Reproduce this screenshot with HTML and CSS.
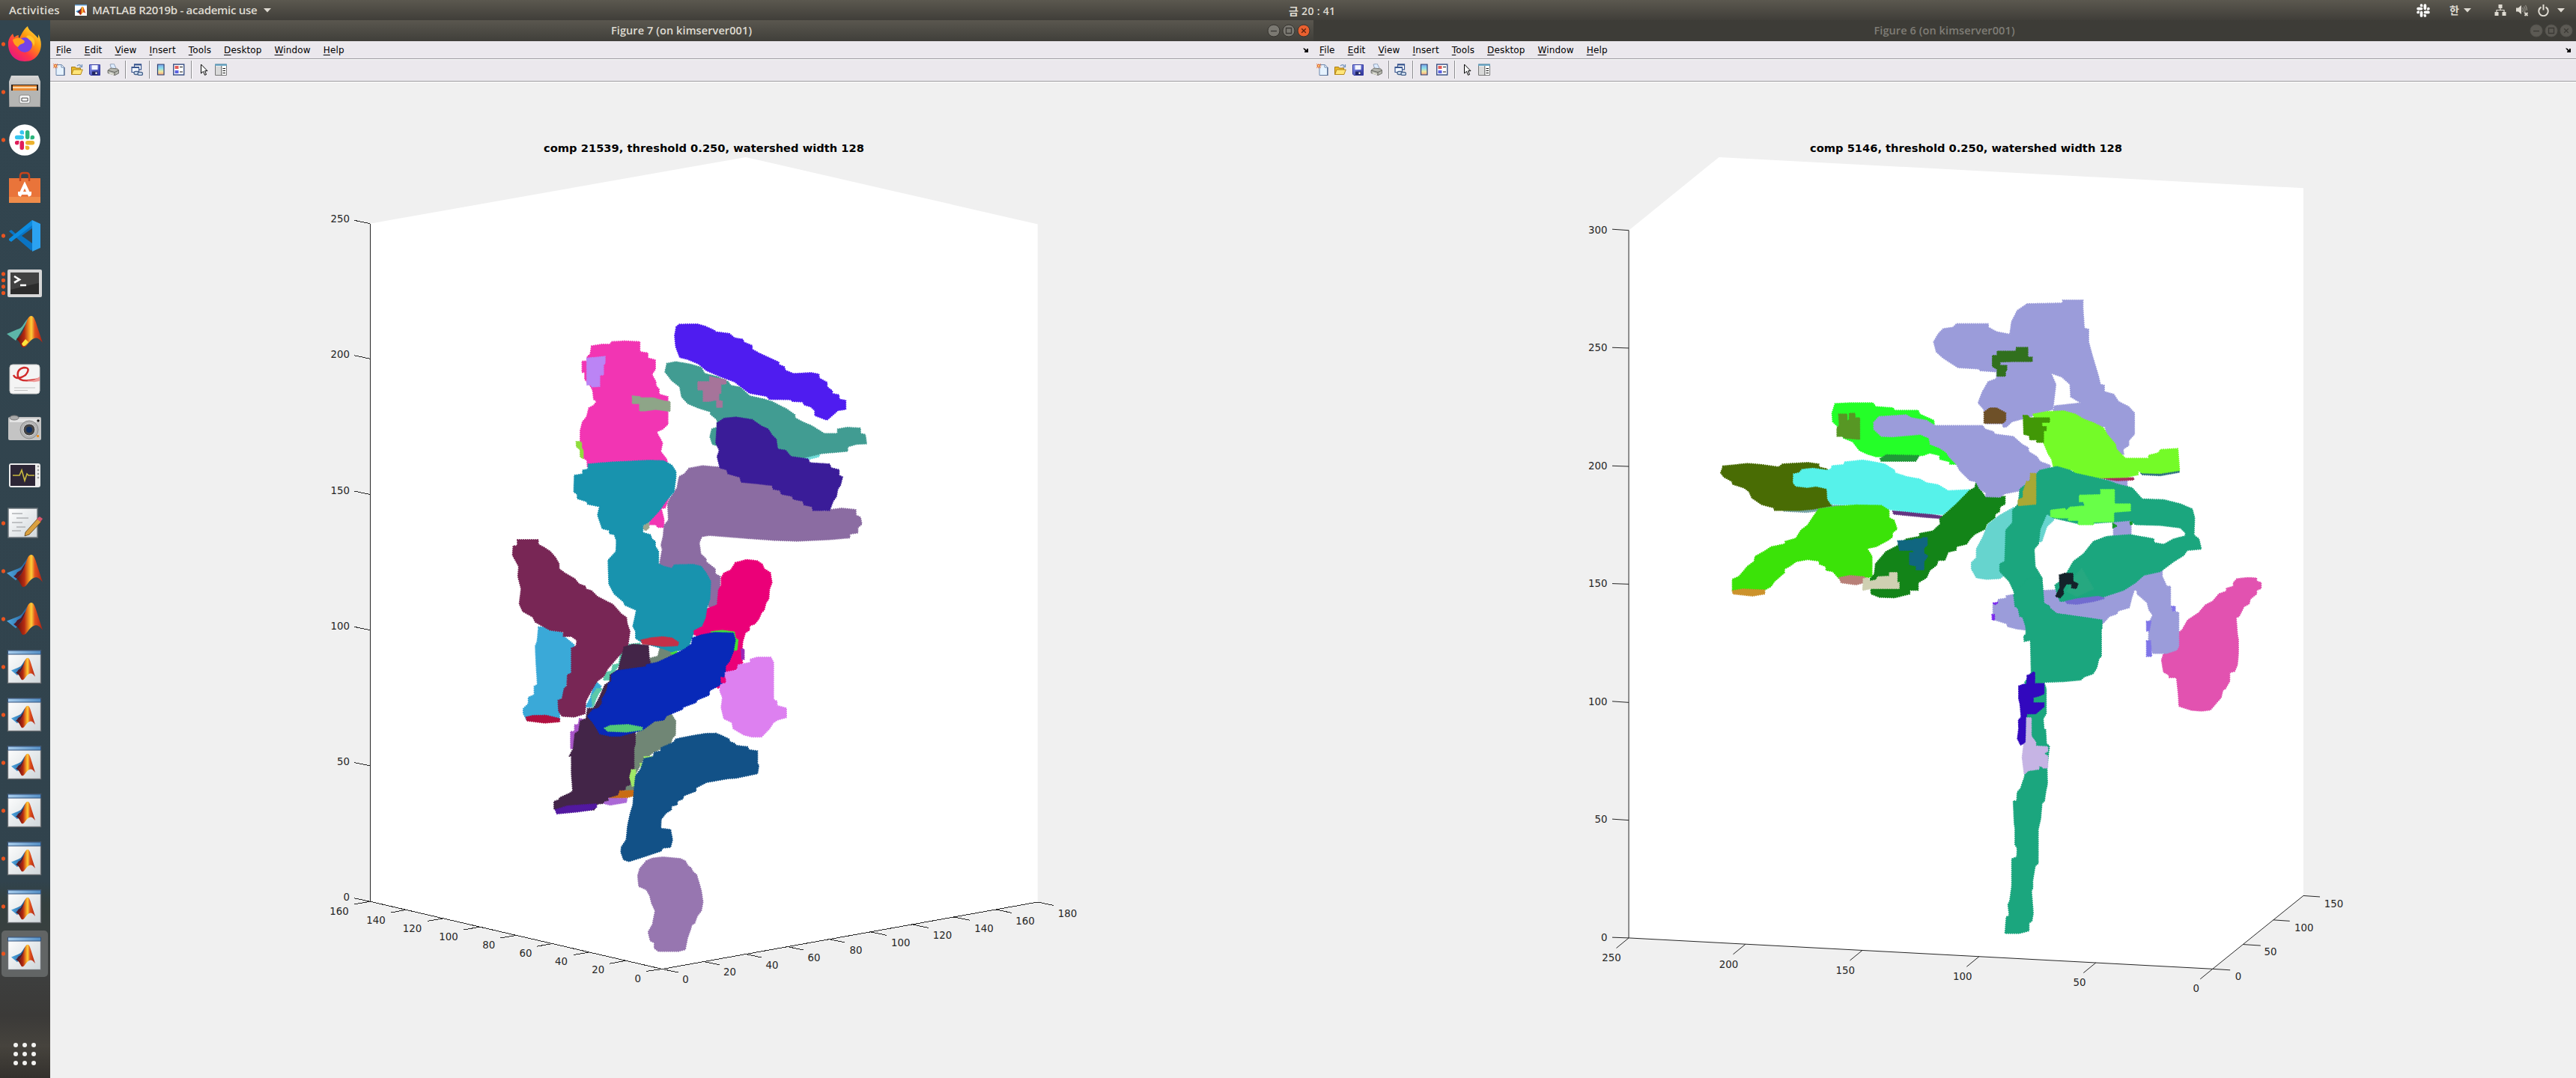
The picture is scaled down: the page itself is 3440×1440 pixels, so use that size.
FILE: index.html
```html
<!DOCTYPE html>
<html lang="ko">
<head>
<meta charset="utf-8">
<title>MATLAB R2019b - academic use</title>
<link rel="stylesheet" href="styles.css">
</head>
<body>
<svg class="defs" width="0" height="0" aria-hidden="true">
  <defs>
    <linearGradient id="membrane" x1="0" x2="1"><stop offset="0" stop-color="#5a1010"/><stop offset=".3" stop-color="#b52a12"/><stop offset=".5" stop-color="#f9a326"/><stop offset=".57" stop-color="#fbd13a"/><stop offset=".7" stop-color="#e2531d"/><stop offset="1" stop-color="#a81f14"/></linearGradient>
    <linearGradient id="wing" x1="0" x2="1"><stop offset="0" stop-color="#4fa6e0"/><stop offset="1" stop-color="#1d568f"/></linearGradient>
    <linearGradient id="fox" x1="1" y1="0" x2=".2" y2="1"><stop offset="0" stop-color="#fff44f"/><stop offset=".4" stop-color="#ff980e"/><stop offset=".7" stop-color="#ff3647"/><stop offset="1" stop-color="#e31587"/></linearGradient>
    <linearGradient id="steel" x1="0" x2="0" y1="0" y2="1"><stop offset="0" stop-color="#d8d8d8"/><stop offset="1" stop-color="#8d8d8d"/></linearGradient>
    <linearGradient id="paper" x1="0" x2="1" y1="0" y2="1"><stop offset="0" stop-color="#fff"/><stop offset="1" stop-color="#cfd6da"/></linearGradient>
    <linearGradient id="sky" x1="0" x2="1"><stop offset="0" stop-color="#a9cdec"/><stop offset="1" stop-color="#5590c6"/></linearGradient>
    <linearGradient id="rainbow" x1="0" x2="0" y1="0" y2="1"><stop offset="0" stop-color="#7aa5ee"/><stop offset=".4" stop-color="#8fe0e8"/><stop offset=".7" stop-color="#f4e69a"/><stop offset="1" stop-color="#f0a080"/></linearGradient>
    <linearGradient id="disk" x1="0" x2="1" y1="0" y2="1"><stop offset="0" stop-color="#8e9bf0"/><stop offset="1" stop-color="#2a2f9c"/></linearGradient>

    <symbol id="logo" viewBox="0 0 48 44" preserveAspectRatio="none">
      <path d="M0 25 14 19.500q5-1 8-6 4-7 10-12l-8 20-12 13z" fill="url(#wing)"/>
      <path d="M13 32C22 27 24 14 28 5q2-4 5-4c4 0 6 9 9 18l6 18c-7-9-11-7-16-3-5 5-6 9-10 9-3 0-4-8-9-11z" fill="url(#membrane)"/>
      <path d="M13 32c7-4 10-13 12-20l-6 9-5 3q-3 5-5 5z" fill="#521a28"/>
    </symbol>
    <symbol id="figure-window" viewBox="0 0 48 48">
      <rect x="1.500" y="2" width="44" height="43.500" fill="url(#paper)" stroke="#6b6f73" stroke-width="1.300"/>
      <path d="M1.500 2h44v5h-44z" fill="url(#sky)" stroke="#2f4f78" stroke-width="1"/>
      <use href="#logo" x="6" y="11" width="32" height="31"/>
    </symbol>
    <symbol id="slack" viewBox="0 0 24 24">
      <path d="M9 1.500a2.200 2.200 0 1 0 0 4.500h2.200V3.700A2.200 2.200 0 0 0 9 1.500zM1.500 9.200A2.200 2.200 0 0 0 3.700 11.400H9A2.200 2.200 0 0 0 9 7H3.700a2.200 2.200 0 0 0-2.200 2.200z" class="s1"/>
      <path d="M22.500 9.200a2.200 2.200 0 1 0-4.400 0v2.200h2.200a2.200 2.200 0 0 0 2.200-2.200zM14.900 1.500a2.200 2.200 0 0 0-2.200 2.200V9a2.200 2.200 0 0 0 4.400 0V3.700a2.200 2.200 0 0 0-2.200-2.200z" class="s2"/>
      <path d="M14.900 22.500a2.200 2.200 0 1 0 0-4.400h-2.200v2.200a2.200 2.200 0 0 0 2.200 2.200zM22.500 14.900a2.200 2.200 0 0 0-2.200-2.200H15a2.200 2.200 0 0 0 0 4.400h5.300a2.200 2.200 0 0 0 2.200-2.200z" class="s3"/>
      <path d="M1.500 14.900a2.200 2.200 0 1 0 4.400 0v-2.200H3.700a2.200 2.200 0 0 0-2.200 2.200zM9 22.500a2.200 2.200 0 0 0 2.200-2.200V15a2.200 2.200 0 0 0-4.400 0v5.300A2.200 2.200 0 0 0 9 22.500z" class="s4"/>
    </symbol>

    <symbol id="i-new" viewBox="0 0 16 16"><path d="M4 1.500h7.500l3 3v11H4z" fill="#e6f2fe" stroke="#6d87ad"/><path d="M11 1.500v3.500h3.500" fill="#fff" stroke="#6d87ad"/><path d="M15 5v11H5" fill="none" stroke="#4e688f" stroke-width="1.200"/><path d="M0 0l6 6M6 0 0 6M3-.5v7M-.5 3h7" stroke="#e8763d" stroke-width=".9"/><circle cx="3" cy="3" r="1.600" fill="#ffe27a" stroke="#d9542b" stroke-width=".8"/></symbol>
    <symbol id="i-open" viewBox="0 0 16 16"><path d="M.5 14.500v-10h5l1 1.500h6v8.500z" fill="#e9b92c" stroke="#a87b12"/><path d="M.7 14.500 3 8h12.300l-2.500 6.500z" fill="#ffe578" stroke="#b5891c"/><path d="M8 3q3-3 5.500.5M14.500 1v3.500H11" fill="none" stroke="#6d8fbb" stroke-width="1.200"/></symbol>
    <symbol id="i-save" viewBox="0 0 16 16"><path d="M.5 1.500h14v14H2l-1.500-1.500z" fill="url(#disk)" stroke="#3439a0"/><path d="M3.500 2h8v6h-8z" fill="#f3f5ff"/><path d="M4 10.500h7.500V15H4z" fill="#202560"/><path d="M8.500 11.500h2V14h-2z" fill="#fff"/></symbol>
    <symbol id="i-print" viewBox="0 0 16 16"><path d="M4 1l5-1 3 6-6 2z" fill="#dbeaff" stroke="#8090a8" stroke-width=".8"/><path d="M1 9l4-3 9 1 1.500 2v4l-5 2.500L1 12.500z" fill="#b4b5ae" stroke="#6b6c66" stroke-width=".9"/><path d="M1 9l9 2.500 5.500-2.500M10 11.500v4" fill="none" stroke="#5b5c56" stroke-width=".9"/><path d="M3 12.500l6 2" stroke="#e9e9dc" stroke-width="1.400"/></symbol>
    <symbol id="i-link" viewBox="0 0 16 16"><path d="M4.500.8h9v7h-9z" fill="#fff" stroke="#3a5790" stroke-width="1.200"/><path d="M4 1.500h10" stroke="#3a5790" stroke-width="2"/><path d="M1 4.500h9.500v7H1z" fill="#f2f6ff" stroke="#3a5790" stroke-width="1.200"/><path d="M1 5h9.500" stroke="#3a5790" stroke-width="2"/><rect x="4" y="10.500" width="6.500" height="4" rx="2" fill="#dce9f8" stroke="#44608a" stroke-width="1.300"/><rect x="9" y="11.500" width="6.500" height="4" rx="2" fill="#dce9f8" stroke="#44608a" stroke-width="1.300"/></symbol>
    <symbol id="i-colorbar" viewBox="0 0 16 16"><path d="M3.500 1h8.500v14H3.500z" fill="url(#rainbow)" stroke="#2b3f70" stroke-width="1.200"/></symbol>
    <symbol id="i-legend" viewBox="0 0 16 16"><path d="M.7 1h14v14H.7z" fill="#fff" stroke="#3c5285" stroke-width="1.400"/><path d="M2.500 3h5v4h-5z" fill="#e25c58"/><path d="M2.500 9h5v4h-5z" fill="#5c62e0"/><path d="M9 4.500h4M9 11h4" stroke="#111" stroke-width="1"/></symbol>
    <symbol id="i-arrow" viewBox="0 0 16 16"><path d="M5.500 1v12l3-2.700 2 5 2-.8-2-4.800h3.500z" fill="#fff" stroke="#000" stroke-width="1"/></symbol>
    <symbol id="i-prop" viewBox="0 0 16 16"><path d="M.5 1h15v14.500H.5z" fill="#fff" stroke="#777"/><path d="M1 3.500h7.500V15H1z" fill="#d9d9d9"/><path d="M0 .5h16v2.300H0z" fill="#5f9fc0"/><path d="M8.800 3v12.500" stroke="#555"/><path d="M10.500 6.500H14M10.500 9.500H14M10.500 12.500H14" stroke="#111" stroke-width="1.200"/></symbol>
    <symbol id="dock-arrow" viewBox="0 0 8 8"><path d="M0 1.500h2l3 2.500V2h2v5H2V5.500h1.500z" fill="#000"/></symbol>

    <symbol id="b-min" viewBox="0 0 18 18"><circle cx="9" cy="9" r="8" class="disc"/><path d="M5 9.500h8" class="sign"/></symbol>
    <symbol id="b-max" viewBox="0 0 18 18"><circle cx="9" cy="9" r="8" class="disc"/><path d="M5.500 5.500h7v7h-7z" class="sign"/></symbol>
    <symbol id="b-close" viewBox="0 0 18 18"><circle cx="9" cy="9" r="8" class="disc"/><path d="M6.200 6.200l5.600 5.600M11.800 6.200 6.200 11.800" class="sign"/></symbol>
  </defs>
</svg>

<header class="topbar">
  <span class="activities">Activities</span>
  <svg class="app-mark" viewBox="0 0 16 15"><path fill="#fff" d="M0 0h16v15H0z"/><path fill="#5d9cd3" d="M0 0h16v1.500H0z"/><use href="#logo" x="1" y="2.500" width="13.500" height="11.500"/></svg>
  <span class="app-name">MATLAB R2019b - academic use</span>
  <svg class="caret" viewBox="0 0 10 6"><path d="M0 0h10L5 5.500z"/></svg>
  <span class="clock">금 20 : 41</span>
  <div class="tray">
    <svg class="t-slack" viewBox="0 0 24 24"><use href="#slack"/></svg>
    <span class="ime">한</span>
    <svg class="caret ime-caret" viewBox="0 0 10 6"><path d="M0 0h10L5 5.500z"/></svg>
    <svg class="t-net" viewBox="0 0 15 15"><path d="M5 0h5v5H5zM0 10h5v5H0zM10 10h5v5h-5z"/><path d="M7.500 5v2.500M2.500 10V7.500h10V10" fill="none" stroke="#dfdbd2" stroke-width="1.200"/></svg>
    <svg class="t-vol" viewBox="0 0 17 16"><path d="M0 4.500h3L7 1v12L3 9.500H0z"/><path d="M8.500 4q2 3 0 6M10.500 2.500q3 4.500 0 9M12.500 1q2 3 2 7" fill="none" stroke="#8f8c84" stroke-width="1.300"/><path d="M11.500 11l4 4M15.500 11l-4 4" stroke="#dfdbd2" stroke-width="1.800"/></svg>
    <svg class="t-pow" viewBox="0 0 15 16"><path d="M4.500 3.500a6.200 6.200 0 1 0 6 0M7.500 0v7.500" fill="none" stroke="#dfdbd2" stroke-width="2"/></svg>
    <svg class="caret" viewBox="0 0 10 6"><path d="M0 0h10L5 5.500z"/></svg>
  </div>
</header>

<div class="desktop">
<nav class="dock">
  <div class="slot run"><svg viewBox="0 0 48 48"><path d="M2 21C3 16 5 13 8 10l2 5c2-2 4-3 6-3-1 2 0 3 1 4C21 8 23 4 28 0c1 5 4 6 8 10l6 6 0-5c5 8 5 18 1 25-4 8-11 11-19 11C10 47 1 36 2 21z" fill="url(#fox)"/><circle cx="24" cy="25" r="10" fill="#7542e5"/><path d="M8 18q8-5 15 1 2 2-1 4-5 1-7 5-6-3-7-10z" fill="#ffa11a"/><path d="M30 18q5 3 6 9 4-9-4-14-4-2-6 1z" fill="#ffc52b"/></svg></div>
  <div class="slot run"><svg viewBox="0 0 48 48"><path d="M6 2h36l3 8v34H3V10z" fill="url(#steel)"/><path d="M6 14h36v8H6z" fill="#2b2019"/><path d="M8 15h32v7H8z" fill="#e98b35"/><path d="M8 18h32" stroke="#fff0d0" stroke-width="1.500"/><path d="M4 22h40v21H4z" fill="#b5b5b3"/><rect x="17" y="28" width="14" height="11" rx="2" fill="#f4f4f4" stroke="#888"/><path d="M20 32h8v4h-8z" fill="#fff" stroke="#444"/></svg></div>
  <div class="slot run"><svg viewBox="0 0 48 48"><circle cx="24" cy="24" r="20.800" fill="#fff"/><use href="#slack" x="9" y="9" width="30" height="30"/></svg></div>
  <div class="slot"><svg viewBox="0 0 48 48"><path d="M3 11h42v33H3z" fill="#e9743a"/><path d="M3 36h42v8H3z" fill="#f08c4a"/><path d="M18 15V8q0-4 4-4h4q4 0 4 4v7" fill="none" stroke="#c5441b" stroke-width="2.500"/><path d="M17 35l7-15 7 15M15 31h18" fill="none" stroke="#fff" stroke-width="4"/></svg></div>
  <div class="slot run"><svg viewBox="0 0 48 48"><path d="M34 3 14 23 6 16l-3 2 30 26 4-8z" fill="#0a74c4"/><path d="M3 30l3 2 28-22v-7L3 28z" fill="#0c8ce0"/><path d="M34 3l11 5v32l-11 5z" fill="#2ba2f1"/><path d="M34 14v20L20 24z" fill="#33444f"/></svg></div>
  <div class="slot run4"><svg viewBox="0 0 48 48"><rect x="1" y="5" width="46" height="37" rx="2" fill="#d7d7d7"/><path d="M5 9h38v29H5z" fill="#2c2c2c"/><path d="M5 9h38v14L5 32z" fill="#424242"/><path d="M10 14l7 4.500-7 4M18 26h8" fill="none" stroke="#fff" stroke-width="2.600"/></svg></div>
  <div class="slot"><svg viewBox="0 0 48 48"><g transform="translate(0 2)"><path d="M0 25 14 19q5-1 8-6 4-7 10-12L12 34z" fill="#5db5a8"/><path d="M13 32C22 27 24 14 28 5q2-4 5-4c4 0 6 9 9 18l6 18c-7-9-11-7-16-3-5 5-6 9-10 9-3 0-4-8-9-11z" fill="url(#membrane)"/><path d="M20 38c2 6 5 3 9-2l-4-4z" fill="#ffe53b"/></g></svg></div>
  <div class="slot"><svg viewBox="0 0 48 48"><rect x="4" y="4" width="40" height="39" rx="4" fill="#f4f4f4" stroke="#c9c9c9"/><path d="M9 18q4 8 16 0 8-10-2-10-10 2-8 12 2 9 29 3" fill="none" stroke="#d02a2a" stroke-width="2.500"/><path d="M25 24q8 4 19-4v6q-11 3-19-2z" fill="#ee9a98"/><path d="M10 35h28M10 38.500h18" stroke="#c3c3c3"/></svg></div>
  <div class="slot"><svg viewBox="0 0 48 48"><rect x="2" y="10" width="44" height="31" rx="2" fill="#c4c4c4"/><path d="M4 12h40v5H4z" fill="#e4e4e4"/><ellipse cx="10" cy="11" rx="6" ry="3" fill="#aaa" stroke="#777"/><circle cx="30" cy="27" r="12" fill="#b3b3b3" stroke="#8a8a8a"/><circle cx="30" cy="27" r="8" fill="#444" stroke="#ddd"/><circle cx="30" cy="27" r="4" fill="#12305f"/><circle cx="42" cy="15" r="1.700" fill="#111"/><path d="M40 34h3v3h-3z" fill="#e8912a"/></svg></div>
  <div class="slot"><svg viewBox="0 0 48 48"><rect x="3" y="8" width="42" height="32" rx="3" fill="#ececec"/><path d="M5 10h33v28H5z" fill="#2d2636"/><path d="M8 24h9l3-7 4 14 3-9 2 2h8" fill="none" stroke="#c9b93f" stroke-width="1.600"/><g fill="#999"><circle cx="42" cy="12" r="1.300"/><circle cx="42" cy="17" r="1.300"/><circle cx="42" cy="22" r="1.300"/><circle cx="42" cy="27" r="1.300"/></g></svg></div>
  <div class="slot run"><svg viewBox="0 0 48 48"><path d="M2 4h39v39H2z" fill="url(#paper)" stroke="#6a737a" stroke-width="1.500"/><path d="M7 11h14M13 17h16M7 23h14M13 29h12M7 34h12" stroke="#b0b3b5" stroke-width="1.600"/><path d="M25 36 41 18l5 4-16 17-6 2z" fill="#d9a03f" stroke="#5a3c12" stroke-width=".8"/><path d="M40 18l4-3 4 3-3 4z" fill="#d9566c"/></svg></div>
  <div class="slot run"><svg viewBox="0 0 48 48"><use href="#logo" y="1" width="48" height="45"/></svg></div>
  <div class="slot run"><svg viewBox="0 0 48 48"><use href="#logo" y="1" width="48" height="45"/></svg></div>
  <div class="slot run"><svg><use href="#figure-window"/></svg></div>
  <div class="slot run"><svg><use href="#figure-window"/></svg></div>
  <div class="slot run"><svg><use href="#figure-window"/></svg></div>
  <div class="slot run"><svg><use href="#figure-window"/></svg></div>
  <div class="slot run"><svg><use href="#figure-window"/></svg></div>
  <div class="slot run"><svg><use href="#figure-window"/></svg></div>
  <div class="slot run active"><svg><use href="#figure-window"/></svg></div>
  <svg class="apps" viewBox="0 0 30 30"><g fill="#f2f2f0"><circle cx="3" cy="3" r="3"/><circle cx="15" cy="3" r="3"/><circle cx="27" cy="3" r="3"/><circle cx="3" cy="15" r="3"/><circle cx="15" cy="15" r="3"/><circle cx="27" cy="15" r="3"/><circle cx="3" cy="27" r="3"/><circle cx="15" cy="27" r="3"/><circle cx="27" cy="27" r="3"/></g></svg>
</nav>

<section class="window focused">
  <div class="titlebar"><span class="caption">Figure 7 (on kimserver001)</span><div class="buttons"><svg><use href="#b-min"/></svg><svg><use href="#b-max"/></svg><svg class="close"><use href="#b-close"/></svg></div></div>
  <div class="menubar"><span><u>F</u>ile</span><span><u>E</u>dit</span><span><u>V</u>iew</span><span><u>I</u>nsert</span><span><u>T</u>ools</span><span><u>D</u>esktop</span><span><u>W</u>indow</span><span><u>H</u>elp</span><svg class="dock-toggle"><use href="#dock-arrow"/></svg></div>
  <div class="toolbar"><svg><use href="#i-new"/></svg><svg><use href="#i-open"/></svg><svg><use href="#i-save"/></svg><svg><use href="#i-print"/></svg><i></i><svg><use href="#i-link"/></svg><i></i><svg><use href="#i-colorbar"/></svg><svg><use href="#i-legend"/></svg><i></i><svg><use href="#i-arrow"/></svg><svg><use href="#i-prop"/></svg></div>
  <svg class="plot" viewBox="67 110 1687 1330">
    <g transform="translate(420 170) scale(.66327 .7398)">
      <path fill="#fff" d="M112 174 868 54 1456 175V1399L700 1520 112 1398z"/>
      <path class="axis" d="M112 174V1398L700 1520 1456 1399
        M112 174l-32-6M112 418l-32-6M112 663l-32-6M112 908l-32-6M112 1153l-32-6M112 1398l-32-6
        M112 1398l-32 5M185.500 1413l-32 5M259 1428.500l-32 5M332.500 1444l-32 5M406 1459l-32 5M479.500 1474l-32 5M553 1489.500l-32 5M626.500 1505l-32 5M700 1520l-32 4
        M700 1520l32 6M784 1506.500l32 6M868 1493l32 6M952 1479.500l32 6M1036 1466l32 6M1120 1453l32 6M1204 1439.500l32 6M1288 1426l32 6M1372 1412.500l32 6M1456 1399l32 6"/>
    </g>
    <g class="voxels" transform="translate(640 820) scale(.357143 .333333)">
      <path class="v" style="--c:#3aa9d8" d="M222 53H262V66L310 73 316 90 355 125 346 240 330 250 322 320 300 345V425H178L165 400V380L184 360V335L206 325V290L218 284 213 200 210 130 217 110z"/>
      <path class="v" style="--c:#3aa9d8" d="M433 268 455 290 440 330 420 373H398L415 340z"/>
      <path class="v" style="--c:#708675" d="M678 128 720 150 735 160 690 190 640 200V178L668 170z"/>
      <path class="v" style="--c:#708675" d="M718 402 734 430 733 485 722 498 715 520 680 540 650 555 610 590 585 640 580 710H545L560 640 578 500 600 460 690 400z"/>
      <path class="v" style="--c:#5cc8a8" d="M540 125 600 118 605 130 560 140 540 150 525 200 500 240 490 265 465 265 470 235 495 230 500 205 522 200 528 160zM440 300 460 300 445 320 435 345 425 375 420 330z"/>
      <path class="v" style="--c:#a855c8" d="M375 420 395 425 350 540H342V472H357V445H370z"/>
    </g>
    <g class="voxels" transform="translate(640 400) scale(.357143 .333333)">
      <path class="v" style="--c:#f235b3" d="M420 187 460 180H490L495 170 545 167 600 170V210L630 215V235L658 243V280L645 300 660 330V345L672 360V380L705 390V500L685 520 662 530 672 550 685 575 678 610 700 640 705 665 680 700 708 795 695 835 680 838 690 880V913H668L660 902H635L650 850 600 700 405 670 403 645 390 635V610L378 575V525L386 492 402 470 410 435 428 425 440 408 428 400 425 365 415 345 395 320V292H385V248H402L405 228 415 220z"/>
      <path class="v grid" style="--c:#bb84f5" d="M403 236 470 229V255L464 262V302H450V348L420 350V342H403z"/>
      <path class="v grid" style="--c:#8ea588" d="M573 387 600 390 605 395H650L690 407 713 410V448L660 440 620 446H600V417H573z"/>
      <path class="v grid" style="--c:#8fdc3c" d="M363 570H376L382 575V597L388 604V637L378 630V602L364 590z"/>
      <path class="v grid" style="--c:#9ea58e" d="M628 888 634 895V915L622 926 611 915z"/>
      <path class="v" style="--c:#6fdcd8" d="M1195 635 1272 620 1270 630 1230 641z"/>
      <path class="v" style="--c:#4f1cf0" d="M737 110 748 100 815 99 845 108 880 125V130L935 137 955 155 985 160 990 172 1020 185V200L1045 215 1120 252V262L1140 270 1145 285 1175 298 1240 294 1270 300V315L1300 333V350L1320 367V378L1345 383V400L1370 405V440L1340 445 1325 460 1300 483 1255 465V445L1240 430 1215 422 1210 410 1170 408 1165 401 1085 400 1075 388 1010 375 985 355 955 330 905 310 850 285 820 258 780 240 750 232 735 190 731 145z"/>
      <path class="v" style="--c:#419c92" d="M702 257 735 250 790 260 830 273 842 297 890 310 930 330 940 345 975 352 1010 387 1065 400 1095 410 1150 440 1180 463V475L1210 492 1240 505 1290 538 1340 538V520L1375 513 1425 516V537L1443 542 1448 578 1410 580 1377 590V608L1280 617 1210 635 1110 640 900 560 887 585 872 580 863 550 870 520 890 512V482L865 460V450L820 435 780 417 757 390 750 350 720 325 695 290z"/>
      <path class="v grid" style="--c:#a6749a" d="M862 310 922 323V338L903 340V375L895 378V405L908 408V432H888V402L860 408H838V362H818V330H862z"/>
      <path class="v" style="--c:#8b6ca2" d="M785 677 835 667 925 675 1000 720 1100 745 1130 775 1200 800 1290 850 1300 845 1355 837 1408 843V865L1425 873 1430 900 1415 915V935L1385 940V955L1310 962 1190 968 1105 965 1000 957 860 945 832 950 822 975 828 1020 848 1040V1052L882 1080V1100L900 1110V1160L895 1225 865 1240 840 1200 760 1080 685 1075 675 1060 685 1000 680 985 688 950 692 905 708 885 705 820 712 800 740 755 748 710 767 700z"/>
      <path class="v" style="--c:#3a1c98" d="M890 495 915 477 960 472 1020 482 1055 508 1080 520 1095 545 1110 560 1115 600 1145 605 1165 630 1230 640 1235 655 1310 660 1315 675 1345 683V705L1358 712 1350 745 1340 760 1335 790 1322 810 1310 845H1248L1245 830 1215 823 1210 808 1175 800 1170 788 1130 780 1125 765 1100 760 1095 745 1040 738 980 732 975 712 930 698 925 682 900 675 890 630 898 605 885 575z"/>
      <path class="v" style="--c:#eb0078" d="M958 1055 1000 1043 1040 1048 1058 1062 1065 1080 1088 1095 1094 1135 1085 1160 1082 1200 1072 1215 1065 1245 1055 1255 1045 1280 1030 1300 1010 1308V1325L995 1335 985 1370 980 1430 985 1460 940 1500 895 1558 880 1550 900 1400 800 1340V1325L832 1308 850 1240 890 1225 895 1165 905 1145V1115L915 1097 940 1085z"/>
      <path class="v" style="--c:#1893ae" d="M408 660 500 652 640 645 690 647 720 665 735 690V710L728 770 700 805 670 850 635 890 611 905V935L640 943 645 960 658 970V990L670 1010V1060L690 1070 720 1078 730 1064 800 1062 830 1070 850 1100 865 1130 862 1200 850 1240 845 1275 832 1308 800 1325V1340L780 1400 720 1412 690 1400 610 1375 585 1358V1330L575 1310 588 1245 545 1225 540 1212 505 1180 485 1140 482 1045 512 1010 513 965 505 942 487 938V925L460 918 443 865 450 830 405 820 403 810 367 798V780L354 772 356 705 387 700V685L407 680z"/>
      <path class="v" style="--c:#782655" d="M143 963H220V982L240 993 265 1010 285 1035 298 1060V1080L320 1097 357 1120 372 1140 397 1150V1160L420 1168 440 1190 500 1223 530 1260 550 1275 553 1300 563 1330 555 1390 520 1430 480 1480 465 1510 440 1530 415 1575 398 1610 395 1660 355 1673 310 1670 297 1650 295 1607 310 1600 318 1560 328 1550 330 1505 345 1498V1398L362 1390 366 1366 345 1350H315V1332L265 1325 210 1293 200 1272 163 1250 150 1220 157 1160 145 1110 148 1070 125 1025 127 988H143z"/>
    </g>
    <g class="voxels" transform="translate(640 820) scale(.357143 .333333)">
      <path class="v" style="--c:#c43048" d="M606 105 640 97 685 92 720 97 745 115 742 127 690 130 610 120z"/>
      <path class="v" style="--c:#b01040" d="M176 414 200 408 250 407 300 420V432L245 437 178 428z"/>
      <path class="v" style="--c:#432548" d="M542 133 575 122 632 127 635 175 640 200 600 460 583 470V520L578 540V620L570 635 563 685 547 690 545 705 527 715 510 740 470 758 440 762 430 785 290 790 280 780V752L300 745V738L340 718 350 710 345 640V570H337L352 540 358 480 372 470 378 430 400 420 405 380 428 378 445 345 460 310 470 285 488 272 490 245 520 225 528 190z"/>
      <path class="v" style="--c:#5218a0" d="M285 785 330 770 438 762V775L420 785 370 793 290 801z"/>
      <path class="v" style="--c:#c86c14" d="M527 710 580 708V728L545 738 485 740 520 728z"/>
      <path class="v" style="--c:#ab68d6" d="M485 740H552L550 755 490 766 467 760V755L485 750z"/>
      <path class="v grid" style="--c:#9fe868" d="M570 625H584L585 690H572L563 655zM602 600H612L605 615zM617 573 647 572 640 582H620z"/>
      <path class="v grid" style="--c:#9a28b8" d="M980 142H990V182H982z"/>
      <path class="v grid" style="--c:#3fe338" d="M868 72 910 67 953 73 958 98 967 105 963 145 950 145 945 90zM718 158 740 150 730 165z"/>
      <path class="v" style="--c:#0829b8" d="M797 97 830 85 880 75 950 77 957 105 950 150 935 190 920 210V235L908 280 860 308V325L815 345 810 355 760 375V382L700 408 690 425 655 430 610 465 560 480 525 490H490L450 480 440 460 425 435 405 410 425 385 447 378 460 360V340L475 315 483 280 495 270V245L515 228 625 212V204L665 195 700 178 735 160 770 140 795 120z"/>
      <path class="v" style="--c:#52c876" d="M469 458 490 448 555 444 609 455V465L550 473 480 470z"/>
      <path class="v" style="--c:#dd80f0" d="M1015 182 1040 174H1090L1100 195V345L1113 350V368L1148 378V415L1115 425 1100 435 1085 460 1055 493 1020 493 990 485 950 460 945 435 915 420 905 375 910 335 900 310 902 285 920 275V235L965 225 968 205 1013 195z"/>
      <path class="v grid" style="--c:#eb0078" d="M905 255 920 258V275H905z"/>
      <path class="v" style="--c:#125187" d="M727 515 735 502 790 490 845 480 885 479 910 490 935 503V512L955 520 960 528 1003 533 1008 545 1040 550V600L1045 608 1040 640 960 658 930 660 850 675 810 697V710L765 728 760 742 740 750V765L718 770V785L698 798 680 823 678 860 715 865 722 905 715 935 685 938 680 950 610 975 560 992 540 985 530 955 532 935 550 905 555 850 565 800 575 765 580 700 585 650 605 620 617 580 650 573 655 555 680 550V537z"/>
      <path class="v" style="--c:#9776b0" d="M625 990 650 979 690 975 750 981 770 990 780 1010 792 1018 798 1033 812 1045 822 1080 830 1110 836 1155 830 1190 815 1210 805 1240 795 1245 788 1270 778 1300 770 1345 745 1352H670L655 1340V1318L640 1310 632 1275 648 1245 658 1190 645 1160 638 1130 625 1105 597 1092 593 1050 600 1022z"/>
    </g>
    <g class="ticks end">
      <text x="467" y="297">250</text><text x="467" y="478">200</text><text x="467" y="659.500">150</text><text x="467" y="841">100</text><text x="467" y="1022">50</text><text x="467" y="1203">0</text>
    </g>
    <g class="ticks">
      <text x="453" y="1222">160</text><text x="502" y="1234">140</text><text x="550.500" y="1245">120</text><text x="599" y="1256">100</text><text x="652.800" y="1267">80</text><text x="702" y="1278">60</text><text x="749.600" y="1289">40</text><text x="798.700" y="1300">20</text><text x="851.800" y="1312">0</text>
      <text x="915.500" y="1313">0</text><text x="974.500" y="1303">20</text><text x="1031" y="1294">40</text><text x="1087" y="1284">60</text><text x="1143" y="1274">80</text><text x="1202.700" y="1264">100</text><text x="1258.400" y="1254">120</text><text x="1314" y="1244.700">140</text><text x="1369" y="1235">160</text><text x="1425.500" y="1225">180</text>
    </g>
    <text class="plot-title" x="726" y="202.500" textLength="428">comp 21539, threshold 0.250, watershed width 128</text>
  </svg>
</section>

<section class="window">
  <div class="titlebar"><span class="caption">Figure 6 (on kimserver001)</span><div class="buttons"><svg><use href="#b-min"/></svg><svg><use href="#b-max"/></svg><svg><use href="#b-close"/></svg></div></div>
  <div class="menubar"><span><u>F</u>ile</span><span><u>E</u>dit</span><span><u>V</u>iew</span><span><u>I</u>nsert</span><span><u>T</u>ools</span><span><u>D</u>esktop</span><span><u>W</u>indow</span><span><u>H</u>elp</span><svg class="dock-toggle"><use href="#dock-arrow"/></svg></div>
  <div class="toolbar"><svg><use href="#i-new"/></svg><svg><use href="#i-open"/></svg><svg><use href="#i-save"/></svg><svg><use href="#i-print"/></svg><i></i><svg><use href="#i-link"/></svg><i></i><svg><use href="#i-colorbar"/></svg><svg><use href="#i-legend"/></svg><i></i><svg><use href="#i-arrow"/></svg><svg><use href="#i-prop"/></svg></div>
  <svg class="plot" viewBox="1754 110 1686 1330">
    <g transform="translate(2080 170) scale(.68878 .75255)">
      <path fill="#fff" d="M138 183 313 53 1446 108V1364L1270 1494 138 1439z"/>
      <path class="axis" d="M138 183V1439L1270 1494 1446 1364
        M138 183l-32-2M138 392l-32-1M138 602l-32-1M138 811l-32-1M138 1021l-32-2M138 1230l-32-2M138 1439l-32-1
        M138 1439l-24 18M364.400 1450l-24 18M590.800 1461l-24 18M817.200 1472l-24 18M1043.600 1483l-24 18M1270 1494l-24 18
        M1270 1494l34 2M1329 1450.500l34 2M1387.500 1407l32 2M1446 1364l32 2"/>
    </g>
    <g class="voxels" transform="translate(2560 740) scale(.333333)">
      <path class="v" style="--c:#e252b0" d="M1282 100 1325 95 1360 97V110L1378 115V138L1360 145V160L1335 180 1330 200 1310 210 1290 250 1278 255 1283 320 1287 345V400L1283 445 1272 470 1252 475V510L1235 540 1225 545 1218 575 1205 590 1175 625 1140 629 1100 626 1050 610 1047 560 1040 495H1010V485L988 473 980 425 988 400 1045 370 1048 315 1062 305 1085 265 1130 235 1155 205 1185 190 1210 160 1240 150V138L1268 130V115z"/>
      <path class="v" style="--c:#9b9cda" d="M982 65V90L1000 130H1015V210L1028 230 1048 235V370L1040 385 1000 398H945L928 345 930 275 945 245 930 225 922 195 900 175 882 160V145H870L860 175 850 215 805 228 800 240 770 250 745 278 600 260 500 210 440 305 400 300 362 290V280L305 262V200L325 195V183L358 178V168L400 160 500 147 550 145 700 160 860 100z"/>
      <path class="v" style="--c:#7f75e8" d="M920 270H937L930 308H920zM920 348H935L940 410H920zM1020 210H1034V228H1025z"/>
      <path class="v" style="--c:#7a28ee" d="M306 197 325 194 312 203zM301 243H310V264H302z"/>
    </g>
    <g class="voxels" transform="translate(2260 380) scale(.446429 .333333)">
      <path class="v" style="--c:#9b9cda" d="M1002 78 1108 75V63H1168V95L1172 175 1185 180V230L1195 280 1215 370 1220 400 1232 405V430L1260 440 1275 470 1305 490 1322 515V600L1305 625V645L1288 660 1290 680 1250 690 1235 570H1222L1100 510H1080L1083 487 1163 475 1132 450 1130 400 1105 370 1072 355 1087 400 1078 500 1010 530 955 550 940 570 930 572 928 557H880L872 500 855 475 868 430 885 390 910 378V350L860 345 858 338 795 333 768 310 748 292 730 270 722 230 735 200 750 178 780 172 790 158H885V172L910 190 950 200 955 150 972 105z"/>
      <path class="v" style="--c:#9b9cda" d="M1240 780H1300V812H1260zM1260 945H1312V1010H1260z"/>
      <path class="v" style="--c:#24ff28" d="M427 478 470 475H540L548 490 600 495 605 505H675L680 520 722 545 724 570 710 620 740 650 770 690 788 720H770V710L740 700V685L710 675 690 685 620 690H550L525 680 500 665 480 630 452 615 436 570 420 550 418 515z"/>
      <path class="v grid" style="--c:#579724" d="M438 520H462V545H470V517H486V535H500V620L455 615 450 608H433V575L440 565z"/>
      <path class="v" style="--c:#209838" d="M562 698 580 683 678 686 668 708H565z"/>
      <path class="v" style="--c:#77a2a6" d="M275 908 420 885H455V895L340 913z"/>
      <path class="v" style="--c:#496c04" d="M92 728 165 718 205 722 258 732 270 720 345 714 378 720V732L403 740 412 820 415 887 360 900 320 905H245V895L208 882 178 855 170 830 155 815 120 800V790L95 772 85 755z"/>
      <path class="v" style="--c:#643480" d="M600 908 680 913 750 930V938L700 933 602 920z"/>
      <path class="v" style="--c:#56f2ea" d="M303 760 320 755 328 742 360 737 403 745 415 740 418 727 455 722V712L510 704 545 712 575 720 605 745V755L640 770 680 780 700 795 735 803 765 827 830 823 800 870 770 900 750 922 680 915 580 900 560 890 415 880 405 860 403 818 370 808 345 813 310 808 302 795z"/>
      <path class="v" style="--c:#3be308" d="M378 900 430 890 490 884 565 886 588 905V935L603 945 612 980 598 995V1012L585 1025 550 1050 522 1058 537 1090V1170L515 1180H440L420 1150 400 1145V1130L380 1120V1108L345 1102 310 1110 292 1128 275 1140V1155L245 1190 235 1210 215 1225 120 1228V1182L140 1170 165 1130 185 1110 188 1090 215 1070 235 1052 278 1040V1030L310 1018 325 985 345 965 357 940z"/>
      <path class="v" style="--c:#cc922c" d="M120 1228 150 1221 216 1225V1240L180 1248 122 1240z"/>
      <path class="v" style="--c:#138418" d="M850 787 858 800 860 820 875 850H935V880L920 890 918 910 905 920V935L880 960 875 980 845 1000 830 1020 820 1040 790 1050 788 1065 765 1072 755 1105H735L730 1125 710 1145 700 1175 675 1195V1225H650V1240L605 1255 560 1253 535 1240 532 1180 545 1160 548 1120 580 1070 610 1050 640 1020 680 1010V998L720 988 742 960 740 940 790 880 830 825 845 815z"/>
      <path class="v grid" style="--c:#106680" d="M615 1028 660 1025 665 1020H688V1015H702V1045L692 1055V1078L704 1088 692 1110V1143H670V1128L650 1122V1075H665L660 1065 620 1065z"/>
      <path class="v" style="--c:#b88078" d="M440 1175 470 1167 515 1172 520 1192 490 1203 445 1195z"/>
      <path class="v grid" style="--c:#cfd0b2" d="M512 1180 525 1175 530 1190 550 1185 555 1172 590 1170V1155H612V1195H618V1218H535L510 1225z"/>
      <path class="v" style="--c:#9b9cda" d="M543 553 558 530 640 523 655 535 700 545 725 566H868L875 580 900 590 905 600 960 610 985 640 1005 655V670L1030 690 1040 710 1070 725V735L1040 745 1038 760 985 825 935 838 920 852 878 850V835L860 820 848 790 830 785 800 745 790 720 768 690 760 672 740 655 712 640 708 615 682 600 600 610 565 608 543 580z"/>
      <path class="v grid" style="--c:#31701e" d="M970 253H1003V292H1016V308H960L920 310V325H940V345H936V367H912V345H918L898 328V285H912V268H968z"/>
      <path class="v" style="--c:#6e5028" d="M873 512 890 495H910L937 515V545L928 556H873z"/>
      <path class="v" style="--c:#a83058" d="M1215 775H1320V783L1270 786z"/>
      <path class="v" style="--c:#307080" d="M1342 755 1455 745 1457 752 1400 766 1345 762z"/>
      <path class="v" style="--c:#74fb28" d="M1020 520 1060 510 1110 507 1145 520 1170 540 1200 555 1230 575 1240 600 1265 640 1268 660 1295 697H1365V685L1395 675 1400 662 1452 658 1457 745 1400 757 1345 755 1333 745V762L1300 772 1210 776 1140 755V745L1080 730 1075 700 1065 680 1048 625 1030 580z"/>
      <path class="v grid" style="--c:#419806" d="M990 525H1003L1008 535H1068V552H1045V570H1058V585H1050V632H1030V622H1010L1008 605 992 600z"/>
      <path class="v" style="--c:#66d4ce" d="M960 895 1000 900 1060 918 1085 920 1080 945 1060 970 1045 1030 1000 1035 938 1160 920 1178 880 1181 850 1175 835 1140 835 1115 850 1095V1060L870 1010 885 960 920 925z"/>
      <path class="v" style="--c:#1ba67e" d="M1040 745 1090 730 1130 745 1145 757 1240 785 1270 800 1315 815 1345 860 1410 863 1460 880 1495 900 1502 935 1500 1005 1515 1020 1522 1060 1480 1065 1470 1085 1440 1110 1400 1150 1350 1165 1325 1195 1290 1225 1210 1260 1100 1270 1088 1225 1085 1205 1110 1180 1140 1110 1170 1080 1200 1030 1240 1010 1310 1003 1380 1020V1035L1410 1042 1440 1020 1475 1008V995L1460 975 1400 965 1325 962 1310 945 1250 952 1160 960 1080 935 1060 918 1040 980 1035 1040 1022 1060 1025 1130 1045 1175 1050 1275 1090 1320 1225 1345V1380H1000L985 1320 970 1290 962 1230 948 1190 920 1150V1120L935 1110 938 985 958 955V905L975 880 980 820 1000 800z"/>
      <path class="v grid" style="--c:#a9a834" d="M1012 758H1027V880L975 886V863L990 855V830L1000 790H1010z"/>
      <path class="v grid" style="--c:#68ff48" d="M1222 822H1262V880H1310V907L1260 912V950L1200 952V962H1155V945H1125V935H1090L1072 930V905L1115 898V910L1130 893 1175 888 1170 870H1158V845L1222 843z"/>
      <path class="v grid" style="--c:#139a28" d="M1258 958 1270 968 1258 975zM1310 952H1315V962H1310z"/>
      <path class="v" style="--c:#26a880" d="M1165 1140 1200 1220 1150 1250 1120 1230 1150 1160z"/>
      <path class="v" style="--c:#716bd0" d="M1118 1270 1150 1260 1215 1250 1233 1258 1200 1270 1150 1281 1120 1278z"/>
      <path class="v grid" style="--c:#14222a" d="M1115 1158H1138V1190L1153 1200 1148 1218 1135 1215V1200H1118L1108 1222 1110 1240 1100 1255 1087 1250 1100 1215 1098 1165z"/>
    </g>
    <g class="voxels" transform="translate(2560 740) scale(.333333)">
      <path class="v" style="--c:#1ba67e" d="M388 165 440 100 500 95 508 200 530 208V222L560 240 600 245 700 260 738 268V410L728 420 720 455 705 480 670 492 655 505 590 511 508 514 517 540V640L505 660 508 700 515 705 518 760 530 770 522 840 520 850 522 920 515 955 510 990 500 1000 495 1060 485 1105V1240L473 1250 463 1310V1340L458 1350 465 1440 460 1470 448 1480V1510L410 1520H353L358 1455 370 1450 365 1405 372 1390 380 1330V1222L400 1215 402 1180 393 1165V1100L390 1080 386 990H400L402 955 415 940 432 890V770L440 600 432 515 458 475 455 345 430 350 428 330 437 320 435 255 412 250 405 215 393 210z"/>
      <path class="v grid" style="--c:#3208be" d="M442 487 455 483 465 474H471V520H508V560L490 568 465 575V597H508V612L475 640H440L435 665V755L415 765 403 740 408 700 407 665 418 655 413 600 408 580V530L425 523H440z"/>
      <path class="v grid" style="--c:#c6b4e4" d="M440 657H457V730L475 755V770L523 773V790L507 800 523 810V857H505L500 850H488V862L445 868 430 882 422 815 428 765 437 755z"/>
    </g>
    <g class="ticks end">
      <text x="2146.500" y="312">300</text><text x="2146.500" y="469">250</text><text x="2146.500" y="627">200</text><text x="2146.500" y="784">150</text><text x="2146.500" y="942">100</text><text x="2146.500" y="1099">50</text><text x="2146.500" y="1257">0</text>
    </g>
    <g class="ticks">
      <text x="2152" y="1284">250</text><text x="2308.500" y="1293">200</text><text x="2464.300" y="1301">150</text><text x="2620.700" y="1309">100</text><text x="2777" y="1317">50</text><text x="2932.700" y="1325">0</text>
      <text x="2989" y="1309">0</text><text x="3032" y="1276">50</text><text x="3076.700" y="1244">100</text><text x="3116.600" y="1212">150</text>
    </g>
    <text class="plot-title" x="2417" y="202.500" textLength="417">comp 5146, threshold 0.250, watershed width 128</text>
  </svg>
</section>
</div>
</body>
</html>
```

FILE: styles.css
```css
* { box-sizing: border-box; }
html, body { margin: 0; height: 100%; overflow: hidden; }
body {
  display: flex;
  flex-direction: column;
  background: #f0f0f0;
  font-family: "DejaVu Sans", sans-serif;
}
svg { display: block; flex: none; }
.defs { position: absolute; }

.topbar {
  display: flex;
  align-items: center;
  flex: none;
  height: 27px;
  background: linear-gradient(#5b584f, #403e39);
  color: #dfdbd2;
  font: 600 15px/27px "Open Sans", "Noto Sans CJK KR", sans-serif;
  white-space: nowrap;
}
.topbar svg { fill: #dfdbd2; }
.activities { width: 88px; padding-left: 12px; letter-spacing: .2px; }
.app-mark { width: 16px; height: 15px; margin-left: 12px; }
.app-name { width: 223px; margin-left: 7px; letter-spacing: -.27px; }
.caret { width: 10px; height: 6px; margin-left: 6px; }
.clock { margin-left: 1359px; padding-top: 2px; font-size: 14px; letter-spacing: .3px; }
.tray { display: flex; align-items: center; margin-left: auto; padding-right: 15px; }
.t-slack { width: 20px; height: 20px; margin-right: 25px; filter: brightness(0) invert(1); }
.ime { width: 13px; font-size: 14px; }
.ime-caret { margin-right: 31px; }
.t-net { width: 16px; height: 15px; margin-right: 13px; }
.t-vol { width: 17px; height: 16px; margin-right: 12px; }
.t-pow { width: 15px; height: 16px; margin-right: 5px; }

.desktop { display: flex; flex: 1; min-height: 0; }

.dock {
  display: flex;
  flex-direction: column;
  align-items: center;
  width: 67px;
  background: linear-gradient(#32454f 0, #31434d 1150px, #34403f 1180px, #3e4040 1260px, #3b3a38 1330px, #46433d 1370px, #34312d 1413px);
}
.slot {
  display: flex;
  align-items: center;
  justify-content: flex-end;
  flex: none;
  width: 67px;
  height: 64px;
  padding-right: 10px;
  background: radial-gradient(circle at 4.500px 32px, #e95420 2.300px, transparent 3px);
}
.slot:not(.run):not(.run4) { background: none; }
.run4 {
  background:
    radial-gradient(circle at 4.500px 19px, #e95420 2.300px, transparent 3px),
    radial-gradient(circle at 4.500px 27.500px, #e95420 2.300px, transparent 3px),
    radial-gradient(circle at 4.500px 36px, #e95420 2.300px, transparent 3px),
    radial-gradient(circle at 4.500px 44.500px, #e95420 2.300px, transparent 3px);
}
.slot svg { width: 48px; height: 48px; }
.active {
  width: 62px;
  height: 62px;
  margin: 0 0 1px -2px;
  padding-right: 7px;
  border-radius: 5px;
  background: radial-gradient(circle at 2.500px 31px, #e95420 2.300px, transparent 3px), #626565;
}
.apps { width: 30px; height: 30px; margin: auto 0 17px -1px; }
.s1 { fill: #36c5f0; }
.s2 { fill: #2eb67d; }
.s3 { fill: #ecb22e; }
.s4 { fill: #e01e5a; }

.window { display: flex; flex-direction: column; flex: 1 1 0; width: 1686px; background: #f0f0f0; }
.focused { flex: 0 0 1687px; }
.titlebar {
  display: flex;
  align-items: center;
  flex: none;
  height: 28px;
  padding-right: 4px;
  background: #3d3c37;
  color: #7f7c76;
  --disc: #5c5a54;
  --rim: #55534e;
  --sign: #3b3935;
}
.focused .titlebar {
  background: linear-gradient(#5a574f, #403f3a);
  color: #dfdbd2;
  --disc: #7b7972;
  --rim: #35332f;
}
.caption {
  flex: 1;
  padding-left: 61px;
  text-align: center;
  font: 600 14.500px/26px "Open Sans", sans-serif;
  letter-spacing: .1px;
}
.buttons { display: flex; gap: 2px; }
.buttons svg { width: 18px; height: 18px; }
.disc { fill: var(--disc); stroke: var(--rim); stroke-width: 1; }
.sign { fill: none; stroke: var(--sign); stroke-width: 1.300; }
.close { --disc: #e9602f; --sign: #5a2210; }

.menubar {
  display: flex;
  align-items: center;
  gap: 17px;
  flex: none;
  height: 25px;
  padding: 0 6px 1px 8px;
  background: #ebe8ed;
  border-bottom: 1px solid #fff;
  box-shadow: inset 0 -1px #9b9a9e;
  color: #000;
  font-size: 12px;
  line-height: 24px;
  letter-spacing: .14px;
}
.menubar u { text-underline-offset: 2px; text-decoration-thickness: 1px; }
.dock-toggle { width: 8px; height: 8px; margin-left: auto; }

.toolbar {
  display: flex;
  align-items: center;
  gap: 8px;
  flex: none;
  height: 30px;
  padding: 0 4px 3px;
  background: #ebe8ed;
  border-bottom: 1px solid #fff;
  box-shadow: inset 0 -1px #9b9a9e;
}
.toolbar svg { width: 16px; height: 16px; }
.toolbar i { width: 2px; height: 24px; margin-right: -2px; background: linear-gradient(90deg, #8d8c90 50%, #fff 50%); }

.plot { width: 100%; height: 1330px; }
.axis { fill: none; stroke: #262626; stroke-width: 1; vector-effect: non-scaling-stroke; shape-rendering: crispEdges; }
.v {
  fill: var(--c);
  stroke: var(--c);
  stroke-width: 2.200px;
  stroke-linecap: round;
  stroke-dasharray: 0 2.700;
  vector-effect: non-scaling-stroke;
}
.grid { stroke-dasharray: 0 2.400; }
.ticks { fill: #262626; font: 13.330px "DejaVu Sans", sans-serif; text-anchor: middle; }
.end { text-anchor: end; }
.plot-title { fill: #000; font: bold 14.670px "DejaVu Sans", sans-serif; }
```
